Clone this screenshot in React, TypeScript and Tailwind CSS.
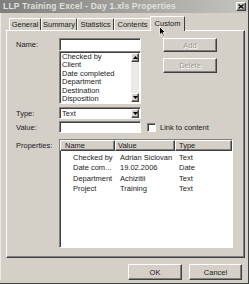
import React from "react"

const raised = "border border-t-white border-l-white border-r-[#404040] border-b-[#404040] shadow-[inset_-1px_-1px_0_#808080]"
const sunken = "border border-t-[#808080] border-l-[#808080] border-r-white border-b-white shadow-[inset_1px_1px_0_#404040]"

const nameItems = ["Checked by", "Client", "Date completed", "Department", "Destination", "Disposition"]

const props = [
  { name: "Checked by", value: "Adrian Siclovan", type: "Text" },
  { name: "Date com...", value: "19.02.2006", type: "Date" },
  { name: "Department", value: "Achizitii", type: "Text" },
  { name: "Project", value: "Training", type: "Text" },
]

const tabs = [
  { label: "General", w: "w-[32px]" },
  { label: "Summary", w: "w-[36px]" },
  { label: "Statistics", w: "w-[37px]" },
  { label: "Contents", w: "w-[37px]" },
]

function Arrow({ down }: { down?: boolean }) {
  return (
    <svg width="5" height="3" viewBox="0 0 5 3">
      <path d={down ? "M0 0h5L2.5 3z" : "M0 3h5L2.5 0z"} fill="#000" />
    </svg>
  )
}

function SmallBtn({ down }: { down?: boolean }) {
  return (
    <div className={`w-[8px] h-[9px] bg-[#d4d0c8] flex items-center justify-center ${raised}`}>
      <Arrow down={down} />
    </div>
  )
}

function PushButton({ label, disabled, className }: { label: string; disabled?: boolean; className?: string }) {
  return (
    <div
      className={`flex items-center justify-center bg-[#d4d0c8] ${raised} ${className ?? ""} ${
        disabled ? "text-[#9c9a94] [text-shadow:1px_1px_0_#fff]" : "text-[#1a1a1a]"
      }`}
    >
      {label}
    </div>
  )
}

export default function App() {
  return (
    <div className="relative w-[249px] h-[284px] overflow-hidden bg-[#d4d0c8] flex flex-col border-r border-b border-r-[#404040] border-b-[#404040] font-['Liberation_Sans',Arial,sans-serif] text-[7.5px] leading-[9px] text-[#1a1a1a]">
      {/* title bar */}
      <div className="h-[13px] flex items-center justify-between pl-[3px] pr-[2px] bg-gradient-to-r from-[#7e7e7e] to-[#c6c4be]">
        <span className="font-bold text-[8.5px] text-[#e2e0da] tracking-[0.2px]">LLP Training Excel - Day 1.xls Properties</span>
        <div className={`w-[10px] h-[9px] bg-[#d4d0c8] flex items-center justify-center ${raised}`}>
          <svg width="6" height="5" viewBox="0 0 6 5">
            <path d="M0.5 0.5L5.5 4.5M5.5 0.5L0.5 4.5" stroke="#000" strokeWidth="1.3" />
          </svg>
        </div>
      </div>

      <div className="pl-[5px] pr-[3px] flex flex-col border-l border-l-[#ecebe6]">
        {/* tabs */}
        <div className="mt-[3px] h-[14px] flex items-end pl-[3px]">
          {tabs.map((t) => (
            <div
              key={t.label}
              className={`${t.w} h-[12px] flex items-center justify-center border-t border-l border-r border-t-white border-l-white border-r-[#404040] rounded-t-[1px]`}
            >
              {t.label}
            </div>
          ))}
          <div className="relative z-10 w-[35px] h-[15px] -mb-[1px] -ml-[1px] flex items-start pt-[2px] justify-center bg-[#d4d0c8] border-t border-l border-r border-t-white border-l-white border-r-[#404040] rounded-t-[1px]">
            Custom
          </div>
        </div>

        {/* panel */}
        <div className="h-[228px] border border-t-white border-l-white border-r-[#404040] border-b-[#404040] shadow-[inset_-1px_-1px_0_#808080] pl-[9px] pt-[7px] flex flex-col">
          <div className="flex">
            <div className="w-[43px] h-[13px] flex items-center">Name:</div>
            <div className="w-[82px] flex flex-col">
              <div className={`h-[13px] bg-white ${sunken}`} />
              <div className={`h-[53px] bg-white flex ${sunken}`}>
                <div className="flex-1 pl-[2px] pt-[1px] leading-[8.4px]">
                  {nameItems.map((n) => (
                    <div key={n}>{n}</div>
                  ))}
                </div>
                <div className="w-[8px] mr-[1px] mt-[1px] mb-[1px] flex flex-col justify-between bg-[#ebeae6]">
                  <SmallBtn />
                  <SmallBtn down />
                </div>
              </div>
            </div>
            <div className="ml-[22px] flex flex-col">
              <PushButton label="Add" disabled className="w-[54px] h-[14px]" />
              <PushButton label="Delete" disabled className="w-[54px] h-[15px] mt-[6px]" />
            </div>
          </div>

          <div className="flex items-center mt-[3px]">
            <div className="w-[43px]">Type:</div>
            <div className={`w-[82px] h-[12px] bg-white flex items-center ${sunken}`}>
              <span className="flex-1 pl-[2px]">Text</span>
              <div className="mr-[1px]">
                <SmallBtn down />
              </div>
            </div>
          </div>

          <div className="flex items-center mt-[2px]">
            <div className="w-[43px]">Value:</div>
            <div className={`w-[82px] h-[12px] bg-white ${sunken}`} />
            <div className={`ml-[6px] w-[9px] h-[9px] bg-white ${sunken}`} />
            <span className="ml-[4px]">Link to content</span>
          </div>

          <div className="flex mt-[6px]">
            <div className="w-[43px] pt-[2px]">Properties:</div>
            <div className={`w-[174px] h-[109px] bg-white flex flex-col ${sunken}`}>
              <div className="h-[11px] flex">
                <div className={`w-[55px] pl-[4px] flex items-center bg-[#d4d0c8] ${raised}`}>Name</div>
                <div className={`w-[60px] pl-[2px] flex items-center bg-[#d4d0c8] ${raised}`}>Value</div>
                <div className={`flex-1 pl-[3px] flex items-center bg-[#d4d0c8] ${raised}`}>Type</div>
              </div>
              <div className="flex flex-col pt-[1px]">
                {props.map((p) => (
                  <div key={p.name} className="flex h-[10.5px] items-center">
                    <div className="w-[55px] pl-[13px] truncate">{p.name}</div>
                    <div className="w-[60px] pl-[5px]">{p.value}</div>
                    <div className="flex-1 pl-[4px]">{p.type}</div>
                  </div>
                ))}
              </div>
            </div>
          </div>
        </div>

        {/* dialog buttons */}
        <div className="mt-[6px] flex justify-end gap-[7px] pr-[3px]">
          <PushButton label="OK" className="w-[54px] h-[16px]" />
          <PushButton label="Cancel" className="w-[53px] h-[16px]" />
        </div>
      </div>

      {/* mouse pointer */}
      <svg className="absolute left-[159px] top-[26px] z-20" width="7" height="11" viewBox="0 0 7 11">
        <path d="M0.5 0.5V9L2.6 7L4 10.3L5.3 9.7L4 6.6H6.6Z" fill="#000" stroke="#fff" strokeWidth="0.8" />
      </svg>
    </div>
  )
}
